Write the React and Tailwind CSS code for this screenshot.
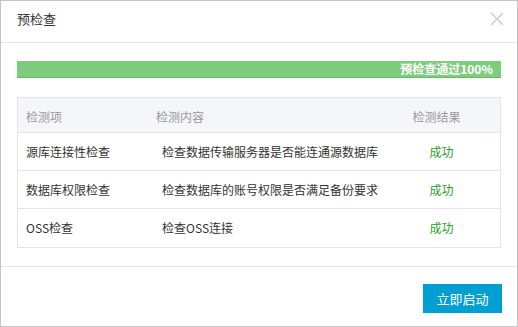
import React from "react";

const rows = [
  ["源库连接性检查", "检查数据传输服务器是否能连通源数据库", "成功"],
  ["数据库权限检查", "检查数据库的账号权限是否满足备份要求", "成功"],
  ["OSS检查", "检查OSS连接", "成功"],
];

const App = () => {
  return (
    <div
      className="w-[518px] h-[327px] bg-white border border-[#c4c4c4] flex flex-col text-[#333]"
      style={{ fontFamily: '"Noto Sans CJK SC", "Noto Sans", sans-serif' }}
    >
      <div className="h-[42px] shrink-0 border-b border-[#e5e5e5] flex items-start justify-between pl-[16px] pr-[13px] pt-[9px]">
        <span className="text-[13px] leading-[18px]">预检查</span>
        <svg width="14" height="14" viewBox="0 0 14 14" className="mt-[2px]">
          <path d="M1 1L13 13M13 1L1 13" stroke="#c8c8c8" strokeWidth="1.2" fill="none" />
        </svg>
      </div>

      <div className="px-[16px] pt-[18px] flex-1">
        <div className="h-[17px] bg-[#7ecd7e] border-b border-[#68b868] flex items-center justify-end pr-[8px]">
          <span className="text-white text-[12px] font-bold leading-none">预检查通过100%</span>
        </div>

        <div className="mt-[19px] border border-[#e5e5e5] text-[12px]">
          <div className="grid grid-cols-[129px_232px_1fr] h-[35px] bg-[#f5f6fa] border-b border-[#e5e5e5] items-center text-[#999] pt-[4px]">
            <div className="pl-[8px]">检测项</div>
            <div className="pl-[9px]">检测内容</div>
            <div className="text-center pr-[6px]">检测结果</div>
          </div>
          {rows.map((r, i) => (
            <div
              key={i}
              className={
                "grid grid-cols-[129px_232px_1fr] h-[38px] items-center " +
                (i < rows.length - 1 ? "border-b border-[#e5e5e5]" : "")
              }
            >
              <div className="pl-[8px]">{r[0]}</div>
              <div className="pl-[15px]">{r[1]}</div>
              <div className="text-center text-[#2aa02a] pl-[4px]">{r[2]}</div>
            </div>
          ))}
        </div>
      </div>

      <div className="h-[60px] shrink-0 border-t border-[#e5e5e5] flex items-start justify-end pr-[15px] pt-[17px]">
        <button className="w-[79px] h-[29px] bg-[#009fd1] text-white text-[13px]">立即启动</button>
      </div>
    </div>
  );
};

export default App;
